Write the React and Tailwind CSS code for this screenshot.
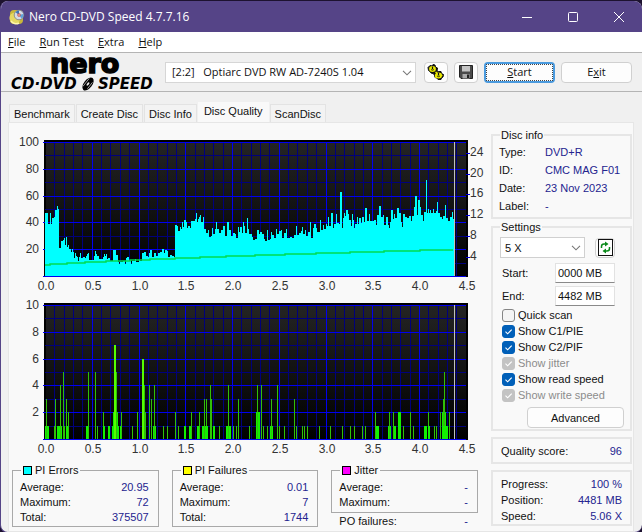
import React from "react";

const PI_ERRORS = [
  [45,213],[48,224],[50,213],[51,224],[52,218],[54,217],[55,210],[57,206],[58,209],[59,248],[61,241],[63,240],[64,238],[65,245],[66,237],[67,247],[68,245],[69,249],[71,252],[72,249],[73,252],[74,258],[75,253],[76,256],[77,257],[78,261],[79,257],[80,253],[81,258],[83,257],[85,258],[86,256],[87,254],[88,253],[89,260],[94,256],[95,251],[96,254],[97,256],[99,259],[103,257],[104,254],[105,256],[106,254],[107,259],[108,258],[110,261],[113,250],[116,255],[118,262],[119,264],[120,262],[123,261],[125,264],[126,258],[127,257],[129,261],[131,264],[132,261],[135,259],[136,262],[139,260],[140,261],[142,253],[144,252],[146,256],[148,257],[149,253],[150,250],[152,257],[154,253],[156,256],[158,253],[160,252],[162,249],[164,253],[165,250],[167,251],[168,257],[170,255],[172,256],[174,257],[175,225],[177,226],[178,231],[180,227],[181,229],[182,222],[183,227],[184,220],[186,222],[187,228],[188,226],[190,228],[191,221],[195,219],[196,213],[197,222],[198,219],[199,217],[200,215],[201,222],[203,217],[204,229],[206,233],[208,230],[209,237],[211,236],[212,228],[213,234],[215,229],[216,222],[217,229],[219,233],[221,230],[223,226],[225,236],[227,222],[229,230],[231,236],[233,233],[235,234],[236,238],[238,227],[239,232],[240,227],[242,233],[243,222],[244,226],[245,233],[247,218],[248,229],[249,234],[252,237],[253,240],[255,239],[257,230],[259,234],[260,232],[262,234],[264,239],[265,241],[267,230],[268,240],[270,239],[271,232],[272,235],[274,238],[276,229],[277,234],[279,231],[281,230],[282,238],[284,233],[286,229],[287,238],[290,237],[292,238],[294,235],[296,226],[297,235],[299,233],[301,231],[302,227],[303,234],[305,230],[306,236],[308,232],[310,222],[311,238],[313,228],[314,224],[316,228],[317,232],[320,220],[321,230],[323,225],[324,229],[326,224],[327,226],[328,217],[329,226],[331,213],[333,228],[334,224],[336,214],[337,223],[339,224],[340,192],[342,228],[343,218],[344,213],[345,216],[346,210],[348,214],[349,220],[351,226],[352,214],[353,220],[354,228],[355,224],[357,217],[358,224],[359,218],[361,223],[362,217],[364,222],[365,208],[367,221],[369,214],[370,221],[374,220],[376,225],[377,215],[379,206],[381,217],[383,215],[384,225],[386,217],[388,225],[389,228],[390,222],[391,210],[393,219],[394,214],[395,218],[397,208],[399,213],[401,222],[402,227],[403,214],[405,217],[407,218],[409,216],[411,221],[412,216],[414,207],[415,196],[417,215],[418,200],[420,207],[421,215],[423,221],[424,212],[426,180],[427,213],[428,209],[429,213],[430,210],[431,213],[433,209],[434,213],[436,211],[437,202],[438,213],[440,217],[442,219],[443,216],[445,205],[446,218],[448,221],[450,217],[452,212],[453,219],
];

const READ_SPEED = [
  [45,265],[50,264],[67,263],[85,262],[106,261],[130,260],[150,259],[175,258],[200,257],[226,256],[255,255],[285,254],[316,253],[350,252],[384,251],[420,250],[453,250],
];

// [x, failures, width]
const PI_FAILURES = [
  [45,1,4],[46,3,1],[54,1,1],[55,3,1],[57,1,5],[60,4,1],[63,5,1],[64,1,1],[66,3,1],[66,1,3],[68,2,1],[86,1,3],[88,5,1],[95,5,1],[97,1,1],[103,2,1],[103,1,2],[108,1,2],[112,1,7],[113,2,5],[114,7,2],[116,5,1],[120,1,2],[121,2,1],[132,1,1],[137,2,1],[142,6,2],[144,4,1],[145,2,1],[149,4,1],[151,3,1],[153,1,3],[154,4,1],[163,1,1],[167,1,1],[175,2,1],[178,1,1],[184,1,2],[189,1,3],[191,2,1],[197,1,2],[199,2,1],[202,1,3],[204,3,1],[206,3,1],[205,1,3],[210,4,1],[211,3,1],[213,1,2],[219,1,1],[226,1,5],[228,4,1],[233,1,1],[236,1,1],[238,3,1],[249,1,1],[256,2,4],[257,4,1],[261,4,1],[263,1,1],[267,1,1],[270,1,3],[271,3,1],[277,4,1],[279,1,1],[284,1,1],[294,3,1],[296,1,1],[302,1,1],[304,1,1],[307,1,1],[319,1,1],[330,1,1],[342,1,1],[350,1,1],[354,1,1],[362,1,1],[365,1,1],[375,2,1],[376,1,3],[388,1,3],[389,2,1],[393,2,1],[394,1,2],[398,2,3],[403,1,1],[410,2,1],[413,1,1],[424,1,3],[428,2,1],[428,1,2],[434,1,1],[436,1,1],[440,2,1],[442,2,4],[443,3,1],[444,5,1],[443,1,5],[449,2,1],
];

const X_LABELS = ["0.0", "0.5", "1.0", "1.5", "2.0", "2.5", "3.0", "3.5", "4.0", "4.5"];

function Grid({ id, top, labels }) {
  const left = 45;
  const bottom = top + 134;
  const vertical = Array.from({ length: 46 }, (_, i) => i);
  const horizontal = Array.from({ length: 11 }, (_, i) => i);
  const minorX = vertical.filter((i) => i % 5 !== 0);
  const majorX = vertical.filter((i) => i % 5 === 0 && i > 0 && i < 45);
  const x = (i) => Math.round(left + i * 9.35);
  const y = (i) => Math.round(top + i * 13.4);
  return (
    <g shapeRendering="crispEdges">
      <defs>
        <linearGradient id={id} x1="0" y1="0" x2="0" y2="1">
          <stop offset="0" stopColor="#242424" />
          <stop offset="1" stopColor="#000000" />
        </linearGradient>
      </defs>
      <rect x="44" y={top - 2} width="424" height="137" fill="#000000" />
      <rect x="46" y={top} width="420" height="134" fill={`url(#${id})`} />
      {minorX.map((i) => <rect key={i} x={x(i)} y={top} width="1" height="134" fill="#00007c" />)}
      {horizontal.filter((i) => i % 2).map((i) => <rect key={i} x="45" y={y(i)} width="421" height="1" fill="#00007c" />)}
      {majorX.map((i) => <rect key={i} x={x(i)} y={top} width="1" height="134" fill="#0000f0" />)}
      {horizontal.filter((i) => i % 2 === 0).map((i) => <rect key={i} x="43" y={y(i)} width="423" height="1" fill="#0000f0" />)}
      {labels.map((label, i) => (
        <text key={label} x="39" y={y(i * 2) + 4} textAnchor="end">{label}</text>
      ))}
      {X_LABELS.map((label, i) => (
        <text key={label} x={x(i * 5) + 1} y={bottom + 14} textAnchor="middle">{label}</text>
      ))}
    </g>
  );
}

const chartText = "block h-auto w-full fill-[#333] text-[12px]";

function ErrorsChart() {
  let area = "M45 276";
  PI_ERRORS.forEach(([x, y]) => { area += `H${x}V${y}`; });
  area += "H454V276Z";
  let speed = "M45 265";
  READ_SPEED.forEach(([x, y]) => { speed += `H${x}V${y}`; });
  return (
    <svg viewBox="9 132 476 162" className={chartText} role="img" aria-label="PI errors and read speed">
      <Grid id="errorsBack" top={142} labels={["100", "80", "60", "40", "20"]} />
      <path d={area} fill="#00ffff" shapeRendering="crispEdges" />
      <path d={speed} fill="none" stroke="#00dc50" strokeWidth="1.5" />
      <rect x="454" y="142" width="1" height="134" fill="#c0c0c0" />
      {[["24", 153], ["20", 174], ["16", 194], ["12", 215], ["8", 236], ["4", 257]].map(([label, y]) => (
        <g key={label}>
          <rect x="466" y={y} width="4" height="1" fill="#0000e0" />
          <text x="470" y={y + 3}>{label}</text>
        </g>
      ))}
    </svg>
  );
}

function FailuresChart() {
  return (
    <svg viewBox="9 294 476 164" className={chartText} role="img" aria-label="PI failures">
      <Grid id="failuresBack" top={305} labels={["10", "8", "6", "4", "2"]} />
      <g shapeRendering="crispEdges">
        {PI_FAILURES.map(([x, n, w], i) => (
          <rect key={i} x={x} y={Math.round(439 - n * 13.4)} width={w} height={Math.round(n * 13.4)}
            fill={w > 1 ? (n > 5 ? "#55ff00" : "#12f000") : "#30c008"} />
        ))}
      </g>
      <rect x="454" y="305" width="1" height="134" fill="#c0c0c0" />
    </svg>
  );
}

function Rows({ rows, height = "h-[15px]" }) {
  return (
    <dl>
      {rows.map(([label, value]) => (
        <div key={label} className={`flex items-center justify-between ${height}`}>
          <dt>{label}</dt>
          <dd className="text-[#24248f]">{value}</dd>
        </div>
      ))}
    </dl>
  );
}

function Stat({ title, swatch, rows, className }) {
  return (
    <fieldset className={`min-w-0 border border-[#a9a9a9] pt-px pr-[9px] pl-[7px] ${className}`}>
      <legend className="ml-px flex h-4 items-center gap-[3px] px-0.5">
        <span className={`size-[9px] border border-black ${swatch}`} />
        {title}
      </legend>
      <Rows rows={rows} />
    </fieldset>
  );
}

function Check({ id, label, checked, disabled }) {
  return (
    <div className="flex h-4 items-center gap-[3px]">
      <span className="relative size-[13px]">
        <input id={id} type="checkbox" defaultChecked={checked} disabled={disabled}
          className="block size-[13px] appearance-none rounded-[3px] border border-[#858585] bg-[#f4f4f4] checked:border-[#005fb8] checked:bg-[#005fb8] disabled:border-[#c3c3c3] disabled:bg-[#c3c3c3]" />
        {checked && (
          <svg viewBox="0 0 13 13" className="pointer-events-none absolute inset-0 size-[13px]" fill="none" stroke="#fff" strokeWidth="1.1">
            <path d="M3.5 6.7 5.6 8.8 9.7 4.6" />
          </svg>
        )}
      </span>
      <label htmlFor={id} className={disabled ? "text-[#8c8c8c]" : ""}>{label}</label>
    </div>
  );
}

function Chevron() {
  return (
    <svg viewBox="0 0 10 6" className="pointer-events-none absolute top-2 right-1 h-1.5 w-2.5" fill="none" stroke="#777" strokeWidth="1.1">
      <path d="M1 .8 5 4.8 9 .8" />
    </svg>
  );
}

function DiscIcon() {
  return (
    <svg viewBox="0 0 16 16" className="size-4">
      <rect x="1" y="1" width="13" height="14" rx="4" fill="#c9b73a" />
      <circle cx="6" cy="9" r="5.6" fill="#e6d863" />
      <path d="M2 12a6 6 0 0 0 8 2" stroke="#fff7b0" strokeWidth="1.5" fill="none" />
      <circle cx="10" cy="6" r="4.8" fill="#d5dce6" stroke="#6b7080" strokeWidth=".7" />
      <path d="M10 6 6.5 3.2A4.5 4.5 0 0 1 10 1.6Z" fill="#3b74b8" />
      <path d="M10 6 14.2 5A4.3 4.3 0 0 1 12.5 9.6Z" fill="#5fa3d8" />
      <circle cx="10" cy="6" r="1.7" fill="#c8483a" />
      <circle cx="10" cy="6" r=".7" fill="#fff" />
    </svg>
  );
}

function Logo() {
  return (
    <svg viewBox="0 0 150 38" className="ml-2 h-[38px] w-[150px] shrink-0 overflow-visible" role="img" aria-label="nero CD-DVD Speed" fill="#000">
      <text x="41" y="20" className="font-['DejaVu_Sans'] text-[27px] font-bold" stroke="#000" strokeWidth="1.6">nero</text>
      <text x="2" y="36" className="font-['DejaVu_Sans'] text-[15px] font-bold italic">CD·DVD</text>
      <text x="89" y="36" className="font-['DejaVu_Sans'] text-[15px] font-bold italic">SPEED</text>
      <g transform="rotate(38 79 31)">
        <ellipse cx="79" cy="31" rx="4.2" ry="7.5" />
        <ellipse cx="79" cy="31" rx="1" ry="2" fill="#f0f0f0" />
        <path d="M76.5 26v10M81.5 27v8" stroke="#f0f0f0" strokeWidth=".6" />
      </g>
    </svg>
  );
}

const button = "flex items-center justify-center rounded-[4px] border border-[#d0d0d0] bg-[#fdfdfd]";
const tab = "flex h-[18px] items-center border border-b-0 border-[#e3e3e3] bg-[#f3f3f3] px-1 whitespace-nowrap";
const box = "border-2 border-[#e6e6e6]";
const uiFont = "font-['Open_Sans','Noto_Sans',sans-serif]";

export default function App() {
  return (
    <div className="min-h-screen bg-[#1d1230] pt-px font-['Liberation_Sans',Arial,sans-serif] text-[11px] leading-4 text-[#111]">
      <div className="overflow-hidden rounded-lg border-b border-l border-[#554487] bg-[#f0f0f0]">
        <header className={`flex h-[31px] items-center bg-[#554487] pl-2 text-[12px] text-white ${uiFont}`}>
          <DiscIcon />
          <h1 className="ml-1 flex-1">Nero CD-DVD Speed 4.7.7.16</h1>
          <div className="flex">
            <button aria-label="Minimize" className="flex h-[30px] w-[46px] items-center justify-center">
              <svg viewBox="0 0 12 12" className="size-3" stroke="#fff"><path d="M1 6.5h10" /></svg>
            </button>
            <button aria-label="Maximize" className="flex h-[30px] w-[46px] items-center justify-center">
              <svg viewBox="0 0 12 12" className="size-3" fill="none" stroke="#fff"><rect x="1.5" y="1.5" width="9" height="9" rx="1" /></svg>
            </button>
            <button aria-label="Close" className="flex h-[30px] w-[46px] items-center justify-center">
              <svg viewBox="0 0 12 12" className="size-3" stroke="#fff"><path d="m1 1 10 10M11 1 1 11" /></svg>
            </button>
          </div>
        </header>

        <nav className={`flex h-5 items-center gap-3.5 bg-white pl-[7px] text-[11px] ${uiFont}`}>
          <button><u>F</u>ile</button>
          <button><u>R</u>un Test</button>
          <button><u>E</u>xtra</button>
          <button><u>H</u>elp</button>
        </nav>

        <div className={`flex h-10 items-center border-y border-[#b4b4b4] pr-2.5 text-[11px] ${uiFont}`}>
          <Logo />
          <div className="relative ml-1.5 flex-1">
            <select aria-label="Drive" className="block h-[21px] w-full appearance-none border border-[#d6d6d6] bg-white pl-1.5">
              <option>[2:2]&nbsp;&nbsp;&nbsp;Optiarc DVD RW AD-7240S 1.04</option>
            </select>
            <Chevron />
          </div>
          <button aria-label="Options" className={`${button} ml-2 h-[21px] w-6`}>
            <svg viewBox="0 0 18 16" className="h-4 w-[18px] shrink-0">
              <path d="M1 3.5 3 1.5 5 2 6 .5l2 .5.5 2L10.5 4l-.5 3 1.5.5L14 7.5l.5 2 2 1-.5 2.5-1.5 1-.5 1.5h-3l-1-1.5-2-.5-.5-2.5L6 9.5 4 9 3 7.5 1.5 6.5Z" fill="#111" stroke="#111" strokeWidth="1" />
              <ellipse cx="5.5" cy="5" rx="3.4" ry="2.9" fill="#e8e800" />
              <ellipse cx="11.5" cy="11.5" rx="3.6" ry="2.9" fill="#e8e800" />
              <path d="M8.3 8.3h2M2.6 3.8h1M8 13h1M14.8 11v1" stroke="#e8e800" strokeWidth="1.3" />
              <path d="M5.5 2.5v2.8M11.5 8.8v2.8" stroke="#111" strokeWidth="1.2" />
              <path d="M4 5.5q1.5 1.5 3 0M10 12q1.5 1.3 3 0" fill="none" stroke="#111" strokeWidth=".8" />
            </svg>
          </button>
          <button aria-label="Save" className={`${button} ml-1.5 h-[21px] w-6`}>
            <svg viewBox="0 0 14 14" className="size-3.5">
              <path d="M.5.5h13v13H2L.5 12Z" fill="#4a4a4a" stroke="#222" />
              <rect x="3" y="1" width="8" height="5.5" fill="#c4c4c4" />
              <rect x="3.5" y="9" width="7" height="4.5" fill="#aaa" />
              <rect x="8" y="9.5" width="2" height="3.5" fill="#222" />
            </svg>
          </button>
          <button className="ml-1.5 flex h-[21px] w-[71px] items-center justify-center rounded-[4px] border-2 border-[#4a9ade] bg-[#fdfdfd]">
            <span className="flex h-[17px] w-full items-center justify-center border border-dotted border-[#444]"><u>S</u>tart</span>
          </button>
          <button className={`${button} ml-1.5 h-[21px] w-[71px]`}>E<u>x</u>it</button>
        </div>

        <main className="pt-2.5 pr-2 pl-[7px]">
          <div role="tablist" className="flex h-5 items-end gap-px pl-px">
            <button role="tab" className={tab}>Benchmark</button>
            <button role="tab" className={tab}>Create Disc</button>
            <button role="tab" className={tab}>Disc Info</button>
            <button role="tab" aria-selected="true" className="flex h-5 items-center bg-[#f9f9f9] px-1.5 pb-0.5 whitespace-nowrap">Disc Quality</button>
            <button role="tab" className={tab}>ScanDisc</button>
          </div>

          <div className="flex gap-1.5 border border-[#e6e6e6] bg-[#f9f9f9] pt-1 pr-px pb-[3px]">
            <section className="min-w-0 flex-1 pt-[5px]">
              <ErrorsChart />
              <FailuresChart />
              <div className="mt-1 grid grid-cols-3 items-start gap-[13px] pr-[7px] pl-[3px]">
                <Stat title="PI Errors" swatch="bg-[#00ffff]" className="h-[65px]"
                  rows={[["Average:", "20.95"], ["Maximum:", "72"], ["Total:", "375507"]]} />
                <Stat title="PI Failures" swatch="bg-[#ffff00]" className="h-[65px]"
                  rows={[["Average:", "0.01"], ["Maximum:", "7"], ["Total:", "1744"]]} />
                <div className="min-w-0">
                  <Stat title="Jitter" swatch="bg-[#ff00ff]" className="h-[51px]"
                    rows={[["Average:", "-"], ["Maximum:", "-"]]} />
                  <div className="pr-2.5 pl-2">
                    <Rows rows={[["PO failures:", "-"]]} />
                  </div>
                </div>
              </div>
            </section>

            <aside className="w-[141px] shrink-0">
              <fieldset className={`${box} h-[92px] min-w-0 pl-1.5`}>
                <legend className="ml-px px-px">Disc info</legend>
                <dl className="grid grid-cols-[46px_1fr] leading-[18px] whitespace-nowrap">
                  <dt>Type:</dt><dd className="text-[#24248f]">DVD+R</dd>
                  <dt>ID:</dt><dd className="text-[#24248f]">CMC MAG F01</dd>
                  <dt>Date:</dt><dd className="text-[#24248f]">23 Nov 2023</dd>
                  <dt>Label:</dt><dd className="text-[#24248f]">-</dd>
                </dl>
              </fieldset>

              <fieldset className={`${box} h-[212px] min-w-0 pt-0.5 pr-1.5 pl-[7px]`}>
                <legend className="px-px">Settings</legend>
                <div className="flex items-center gap-2.5">
                  <div className="relative w-[85px]">
                    <select aria-label="Speed" className="block h-[21px] w-full appearance-none border border-[#d0d0d0] bg-white pl-1">
                      <option>5 X</option>
                    </select>
                    <Chevron />
                  </div>
                  <button aria-label="Refresh" className={`${button} size-5`}>
                    <svg viewBox="0 0 15 17" className="h-[17px] w-[15px] shrink-0" fill="none" stroke="#0a8a1a" strokeWidth="1.5">
                      <rect x=".5" y=".5" width="14" height="16" fill="#fff" stroke="#111" strokeWidth="1" />
                      <path d="M3.5 9V7.5Q3.5 5 6 5h1.5M11.5 8v1.5Q11.5 12 9 12H7.5" />
                      <path d="m7 2.5 3.5 2.5L7 7.5ZM8 9.5 4.5 12 8 14.5Z" fill="#0a8a1a" stroke="none" />
                    </svg>
                  </button>
                </div>
                <div className="mt-[5px] flex h-5 items-center pl-0.5">
                  <label htmlFor="start" className="w-[53px]">Start:</label>
                  <input id="start" defaultValue="0000 MB" className="h-5 w-[60px] border border-b-[#8a8a8a] border-[#e2e2e2] bg-white px-0.5" />
                </div>
                <div className="mt-[3px] flex h-5 items-center pl-0.5">
                  <label htmlFor="end" className="w-[53px]">End:</label>
                  <input id="end" defaultValue="4482 MB" className="h-5 w-[60px] border border-b-[#8a8a8a] border-[#e2e2e2] bg-white px-0.5" />
                </div>
                <div className="mt-px pl-0.5">
                  <Check id="quick" label="Quick scan" />
                  <Check id="pie" label="Show C1/PIE" checked />
                  <Check id="pif" label="Show C2/PIF" checked />
                  <Check id="jitter" label="Show jitter" checked disabled />
                  <Check id="read" label="Show read speed" checked />
                  <Check id="write" label="Show write speed" checked disabled />
                </div>
                <button className={`${button} mt-1 ml-auto h-[21px] w-[97px]`}>Advanced</button>
              </fieldset>

              <div className={`${box} mt-1.5 flex h-[27px] items-center justify-between px-2`}>
                <span>Quality score:</span>
                <span className="text-[#24248f]">96</span>
              </div>

              <div className={`${box} mt-1.5 h-14 px-2 pt-1`}>
                <Rows height="h-4" rows={[["Progress:", "100 %"], ["Position:", "4481 MB"], ["Speed:", "5.06 X"]]} />
              </div>
            </aside>
          </div>
        </main>
      </div>
    </div>
  );
}
